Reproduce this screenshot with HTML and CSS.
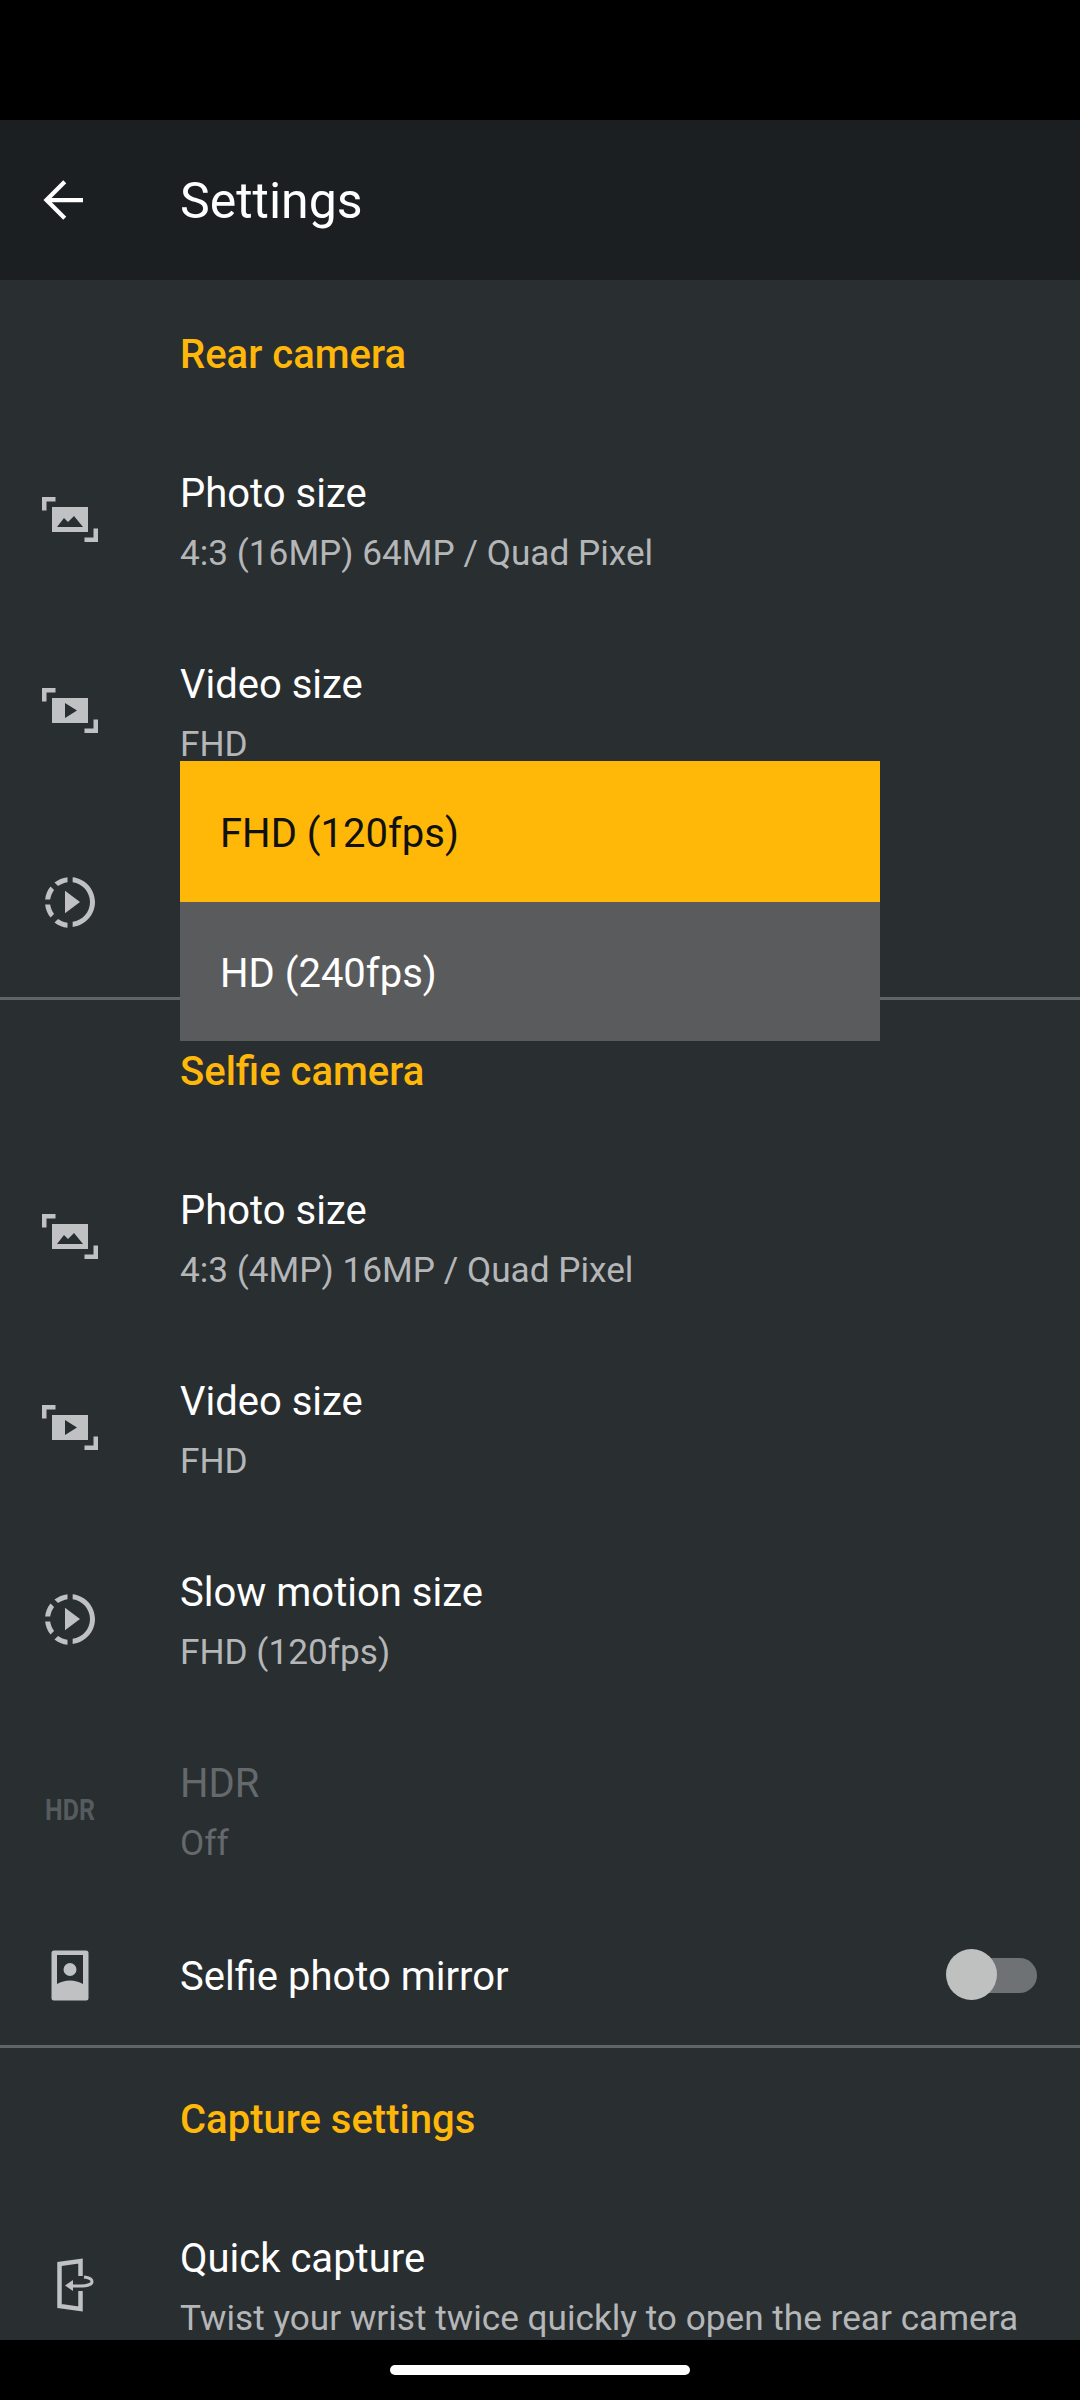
FILE: index.html
```html
<!DOCTYPE html>
<html lang="en">
<head>
<meta charset="utf-8">
<title>Settings</title>
<link rel="stylesheet" href="styles.css">
</head>
<body>
<div class="status-bar"></div>
<header class="toolbar">
  <div class="icon-slot">
    <svg class="icon back" viewBox="0 0 24 24"><path d="M20 12H5.500M12.700 4.700 5.400 12l7.300 7.300"/></svg>
  </div>
  <h1 class="toolbar-title">Settings</h1>
</header>
<main class="content">
  <h2 class="section-head">Rear camera</h2>
  <div class="row">
    <div class="icon-slot"><svg class="icon" viewBox="0 0 60 60"><use href="#i-photo"/></svg></div>
    <div class="texts"><div class="title">Photo size</div><div class="sub">4:3 (16MP) 64MP / Quad Pixel</div></div>
  </div>
  <div class="row">
    <div class="icon-slot"><svg class="icon" viewBox="0 0 60 60"><use href="#i-video"/></svg></div>
    <div class="texts"><div class="title">Video size</div><div class="sub">FHD</div></div>
  </div>
  <div class="row">
    <div class="icon-slot"><svg class="icon" viewBox="0 0 24 24"><use href="#i-slow"/></svg></div>
  </div>
  <hr class="divider">
  <h2 class="section-head">Selfie camera</h2>
  <div class="row">
    <div class="icon-slot"><svg class="icon" viewBox="0 0 60 60"><use href="#i-photo"/></svg></div>
    <div class="texts"><div class="title">Photo size</div><div class="sub">4:3 (4MP) 16MP / Quad Pixel</div></div>
  </div>
  <div class="row">
    <div class="icon-slot"><svg class="icon" viewBox="0 0 60 60"><use href="#i-video"/></svg></div>
    <div class="texts"><div class="title">Video size</div><div class="sub">FHD</div></div>
  </div>
  <div class="row">
    <div class="icon-slot"><svg class="icon" viewBox="0 0 24 24"><use href="#i-slow"/></svg></div>
    <div class="texts"><div class="title">Slow motion size</div><div class="sub">FHD (120fps)</div></div>
  </div>
  <div class="row disabled">
    <div class="icon-slot"><span class="hdr-icon">HDR</span></div>
    <div class="texts"><div class="title">HDR</div><div class="sub">Off</div></div>
  </div>
  <div class="row row-short">
    <div class="icon-slot">
      <svg class="icon" viewBox="0 0 60 60"><path fill-rule="evenodd" d="M14 5.500h32a2.500 2.500 0 0 1 2.500 2.500v45a2.500 2.500 0 0 1-2.500 2.500H14a2.500 2.500 0 0 1-2.500-2.500V8A2.500 2.500 0 0 1 14 5.500zm3 4.500V39c4-2.400 8.200-3.600 13-3.600s9 1.200 13 3.600V10H17zM30 18a6.500 6.500 0 1 1 0 13 6.500 6.500 0 0 1 0-13z"/></svg>
    </div>
    <div class="texts"><div class="title">Selfie photo mirror</div></div>
    <div class="switch"><span class="switch-thumb"></span></div>
  </div>
  <hr class="divider">
  <h2 class="section-head">Capture settings</h2>
  <div class="row">
    <div class="icon-slot">
      <svg class="icon" viewBox="0 0 60 60"><path class="twist" d="M40.500 21V6L19.500 9V51L40.500 54V36"/><path class="twist thin" d="M32 31h8c8 0 12-2 12-4.500S48 22.500 44 22"/><path d="M33 25v11l-8-5.500z"/></svg>
    </div>
    <div class="texts"><div class="title">Quick capture</div><div class="sub">Twist your wrist twice quickly to open the rear camera</div></div>
  </div>
  <ul class="popup">
    <li class="option selected">FHD (120fps)</li>
    <li class="option">HD (240fps)</li>
  </ul>
</main>
<footer class="nav-bar"><span class="nav-pill"></span></footer>
<svg class="defs" aria-hidden="true">
  <defs>
    <g id="i-photo"><path d="M2 20.500V7h13.500v4.500H6.500v9zM58 38.500V52H44.500v-4.500h9v-9z"/><path fill-rule="evenodd" d="M12 17h36v25H12zM17 37h26l-9-11-6 6-4-4z"/></g>
    <g id="i-video"><path d="M2 20.500V7h13.500v4.500H6.500v9zM58 38.500V52H44.500v-4.500h9v-9z"/><path fill-rule="evenodd" d="M12 17h36v25H12zM25 22v15l12-7.500z"/></g>
    <g id="i-slow"><path d="M10 7.500v9l6-4.500zM11 4.070V2.050c-1.970.2-3.760.98-5.210 2.160l1.420 1.420C8.330 4.840 9.620 4.270 11 4.070zM5.630 7.210 4.210 5.790C3.030 7.240 2.250 9.030 2.050 11h2.020c.2-1.380.77-2.670 1.560-3.790zM4.070 13H2.050c.2 1.970.98 3.760 2.160 5.210l1.420-1.420c-.79-1.120-1.360-2.410-1.560-3.790zM5.790 20.210C7.240 21.370 9.030 22.150 11 22.340v-2.020c-1.380-.2-2.670-.77-3.790-1.560L5.790 20.210zM22 12c0 5.160-3.920 9.420-8.940 9.950v-2.020C16.970 19.410 20 16.050 20 12s-3.030-7.410-6.940-7.930V2.050C18.080 2.580 22 6.840 22 12z"/></g>
  </defs>
</svg>
</body>
</html>
```
FILE: styles.css
```css
* { box-sizing: border-box; }
html, body { margin: 0; padding: 0; }
body {
  width: 1080px;
  height: 2400px;
  display: flex;
  flex-direction: column;
  overflow: hidden;
  background: #000;
  font-family: Roboto, "Liberation Sans", sans-serif;
  color: #fff;
}
.status-bar { height: 120px; flex: none; background: #000; }
.toolbar {
  height: 160px;
  flex: none;
  display: flex;
  align-items: center;
  background: #1c1f22;
}
.toolbar-title { margin: 2px 0 0; font-size: 50px; font-weight: 400; color: #fff; }
.content {
  position: relative;
  height: 2060px;
  flex: none;
  overflow: hidden;
  padding-top: 3px;
  background: #292e31;
}
.section-head {
  margin: 0;
  height: 141px;
  padding: 2px 0 0 180px;
  display: flex;
  align-items: center;
  font-size: 40px;
  font-weight: 500;
  color: #ffb70a;
}
.row { height: 191px; display: flex; align-items: center; }
.row-short { height: 140px; }
.icon-slot { width: 180px; flex: none; padding-left: 40px; display: flex; align-items: center; }
.icon { width: 60px; height: 60px; display: block; fill: #bfc1c2; }
.back { fill: none; stroke: #fff; stroke-width: 1.700px; margin-left: -7px; }
.texts { flex: 1; min-width: 0; }
.title { font-size: 40px; line-height: 60px; color: #fff; }
.title:not(:only-child) { margin-top: 8px; }
.title:only-child { margin-top: 4px; }
.sub { margin-top: -1px; font-size: 35.200px; line-height: 60px; color: #b4b6b8; white-space: nowrap; }
.disabled .title, .disabled .sub { color: #65696c; }
.hdr-icon {
  width: 60px;
  text-align: center;
  font-size: 29px;
  font-weight: 700;
  color: #565b5e;
  transform: scaleX(.86);
}
.switch {
  position: relative;
  width: 86px;
  height: 35px;
  margin-right: 43px;
  border-radius: 18px;
  background: #6e7274;
}
.switch-thumb {
  position: absolute;
  left: -5px;
  top: -9px;
  width: 51px;
  height: 51px;
  border-radius: 50%;
  background: #bfc0c0;
}
.divider { margin: 0; height: 3px; border: 0; background: #606568; }
.popup {
  position: absolute;
  left: 180px;
  top: 481px;
  width: 700px;
  margin: 0;
  padding: 0;
  list-style: none;
}
.option {
  height: 139px;
  padding: 3px 0 0 40px;
  display: flex;
  align-items: center;
  font-size: 40px;
  color: #fff;
  background: #5a5b5d;
}
.selected { height: 141px; color: #111; background: #ffb808; }
.nav-bar {
  flex: 1;
  background: #000;
  display: flex;
  justify-content: center;
  padding-top: 25px;
}
.nav-pill { width: 300px; height: 10px; border-radius: 5px; background: #fff; }
.twist { fill: none; stroke: #bfc1c2; stroke-width: 4.500px; }
.twist.thin { stroke-width: 3px; }
.defs { position: absolute; width: 0; height: 0; }
```
